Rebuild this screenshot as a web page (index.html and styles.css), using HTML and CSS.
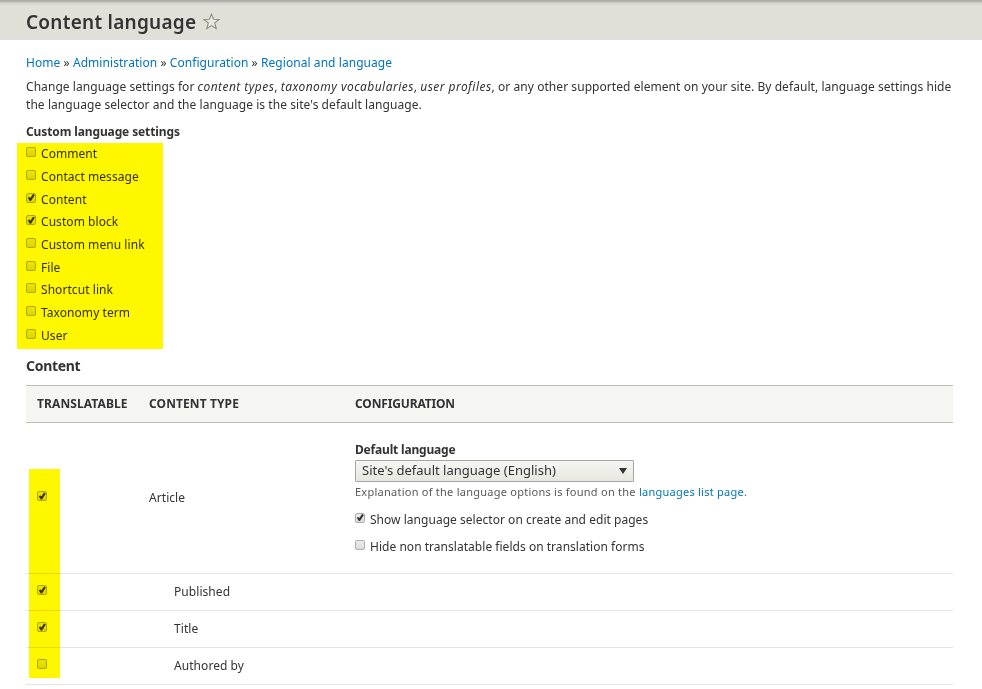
FILE: index.html
```html
<!DOCTYPE html>
<html lang="en" dir="ltr">
<head>
  <meta charset="UTF-8">
  <title>Content language</title>
  <link rel="stylesheet" href="styles.css">
</head>
<body>

  <header class="page-header">
    <h1>Content language</h1>
    <svg class="star" width="17" height="17" viewBox="0 0 17 17">
      <path d="M8.5 1.1 L10.6 6.3 L16 6.5 L11.7 9.9 L13.2 15.6 L8.5 12.6 L3.8 15.6 L5.3 9.9 L1 6.5 L6.4 6.3 Z"/>
    </svg>
  </header>

  <main>
    <nav class="breadcrumb">
      <a href="#">Home</a> » <a href="#">Administration</a> » <a href="#">Configuration</a> » <a href="#">Regional and language</a>
    </nav>

    <div class="help">
      Change language settings for <em>content types</em>, <em>taxonomy vocabularies</em>, <em>user profiles</em>, or any other supported element on your site. By default, language settings hide<br>
      the language selector and the language is the site's default language.
    </div>

    <div class="legend">Custom language settings</div>
    <div class="entity-types">
      <label class="option"><input type="checkbox"><span>Comment</span></label>
      <label class="option"><input type="checkbox"><span>Contact message</span></label>
      <label class="option"><input type="checkbox" checked><span>Content</span></label>
      <label class="option"><input type="checkbox" checked><span>Custom block</span></label>
      <label class="option"><input type="checkbox"><span>Custom menu link</span></label>
      <label class="option"><input type="checkbox"><span>File</span></label>
      <label class="option"><input type="checkbox"><span>Shortcut link</span></label>
      <label class="option"><input type="checkbox"><span>Taxonomy term</span></label>
      <label class="option"><input type="checkbox"><span>User</span></label>
      <div class="marker marker-types"></div>
    </div>

    <h2>Content</h2>
    <div class="table">
      <div class="row head">
        <div class="cell">Translatable</div>
        <div class="cell">Content type</div>
        <div class="cell">Configuration</div>
      </div>
      <div class="row bundle">
        <div class="cell"><input type="checkbox" checked></div>
        <div class="cell">Article</div>
        <div class="cell config">
          <div class="field-label">Default language</div>
          <div class="select"><span>Site's default language (English)</span><i class="arrow"></i></div>
          <div class="description">Explanation of the language options is found on the <a href="#">languages list page</a>.</div>
          <label class="option"><input type="checkbox" checked><span>Show language selector on create and edit pages</span></label>
          <label class="option"><input type="checkbox"><span>Hide non translatable fields on translation forms</span></label>
        </div>
      </div>
      <div class="row field">
        <div class="cell"><input type="checkbox" checked></div>
        <div class="cell">Published</div>
      </div>
      <div class="row field">
        <div class="cell"><input type="checkbox" checked></div>
        <div class="cell">Title</div>
      </div>
      <div class="row field">
        <div class="cell"><input type="checkbox"></div>
        <div class="cell">Authored by</div>
      </div>
      <div class="marker marker-rows"></div>
    </div>
  </main>

</body>
</html>
```

FILE: styles.css
```css
* {
  box-sizing: border-box;
}

body {
  margin: 0;
  height: 689px;
  overflow: hidden;
  background: #fff;
  color: #333;
  font-family: "Noto Sans", "Open Sans", sans-serif;
  font-size: 12px;
  letter-spacing: 0.06px;
  line-height: 18px;
}

a {
  color: #0074bd;
  text-decoration: none;
}

.page-header {
  display: flex;
  align-items: flex-start;
  height: 40px;
  padding: 10px 26px 0;
  background: linear-gradient(#a9a9a5 0, #bcbbb6 2px, #d6d5cd 3px, #e0e0d8 6px);
}

h1 {
  margin: 0;
  font-size: 19px;
  font-weight: 600;
  line-height: 24px;
  letter-spacing: 0.25px;
}

.star {
  margin: 3px 0 0 7px;
  fill: #e9e9e2;
  stroke: #8d8c7e;
  stroke-width: 1.1;
}

main {
  padding: 14px 29px 0 26px;
}

.help {
  margin-top: 6px;
  white-space: nowrap;
}

.help em {
  letter-spacing: 0.45px;
}

.legend {
  margin-top: 9px;
  font-weight: 700;
  letter-spacing: -0.12px;
}

.entity-types {
  position: relative;
  padding-top: 2px;
}

.option {
  display: flex;
  align-items: center;
  height: 22.7px;
}

input {
  appearance: none;
  flex: none;
  width: 10px;
  height: 10px;
  margin: 0 5px 4px 0;
  border: 1px solid #adadad;
  border-radius: 2px;
  background: linear-gradient(#ededed, #dcdcdc);
}

input:checked::after {
  content: "";
  display: block;
  width: 8px;
  height: 8px;
  background: #333;
  clip-path: polygon(10% 50%, 30% 40%, 43% 55%, 75% 5%, 98% 15%, 50% 92%, 35% 92%);
}

/* yellow highlighter over the checkboxes */
.marker {
  position: absolute;
  background: #fff700;
  mix-blend-mode: multiply;
}

.marker-types {
  left: -9px;
  top: 2px;
  width: 146px;
  height: 206px;
}

.marker-rows {
  left: 3px;
  top: 84px;
  width: 31px;
  height: 209px;
}

h2 {
  margin: 9px 0;
  font-size: 14px;
  font-weight: 700;
  line-height: 20px;
  letter-spacing: -0.3px;
}

.table {
  position: relative;
}

.row {
  display: grid;
  grid-template-columns: 123px 206px 1fr;
  align-items: center;
  height: 37px;
  border-bottom: 1px solid #e6e4df;
}

.row .cell:first-child {
  display: flex;
  padding-left: 11px;
}

.head {
  height: 38px;
  border-top: 1px solid #bebfb9;
  border-bottom: 1px solid #bebfb9;
  background: #f5f5f2;
  font-weight: 700;
  letter-spacing: 0.1px;
  text-transform: uppercase;
}

.head .cell:last-child {
  letter-spacing: -0.15px;
}

.bundle {
  height: 151px;
}

.field .cell:nth-child(2) {
  padding-left: 25px;
}

.config {
  align-self: start;
  padding-top: 18px;
}

.field-label {
  font-weight: 700;
  letter-spacing: -0.18px;
}

.select {
  display: flex;
  align-items: center;
  justify-content: space-between;
  width: 279px;
  height: 22px;
  margin-top: 1px;
  padding: 0 6px 2px;
  border: 1px solid #a6a6a6;
  border-radius: 1px;
  background: linear-gradient(#f6f6f3, #e7e7df);
  font-size: 13px;
  letter-spacing: 0;
}

.arrow {
  margin-top: 2px;
  border: 4px solid transparent;
  border-top: 6px solid #333;
  border-bottom: 0;
}

.description {
  margin-bottom: 4px;
  line-height: 20px;
  color: #595959;
  font-size: 11px;
  letter-spacing: 0.25px;
}

.config .option {
  height: 27px;
  letter-spacing: 0.03px;
}
```
